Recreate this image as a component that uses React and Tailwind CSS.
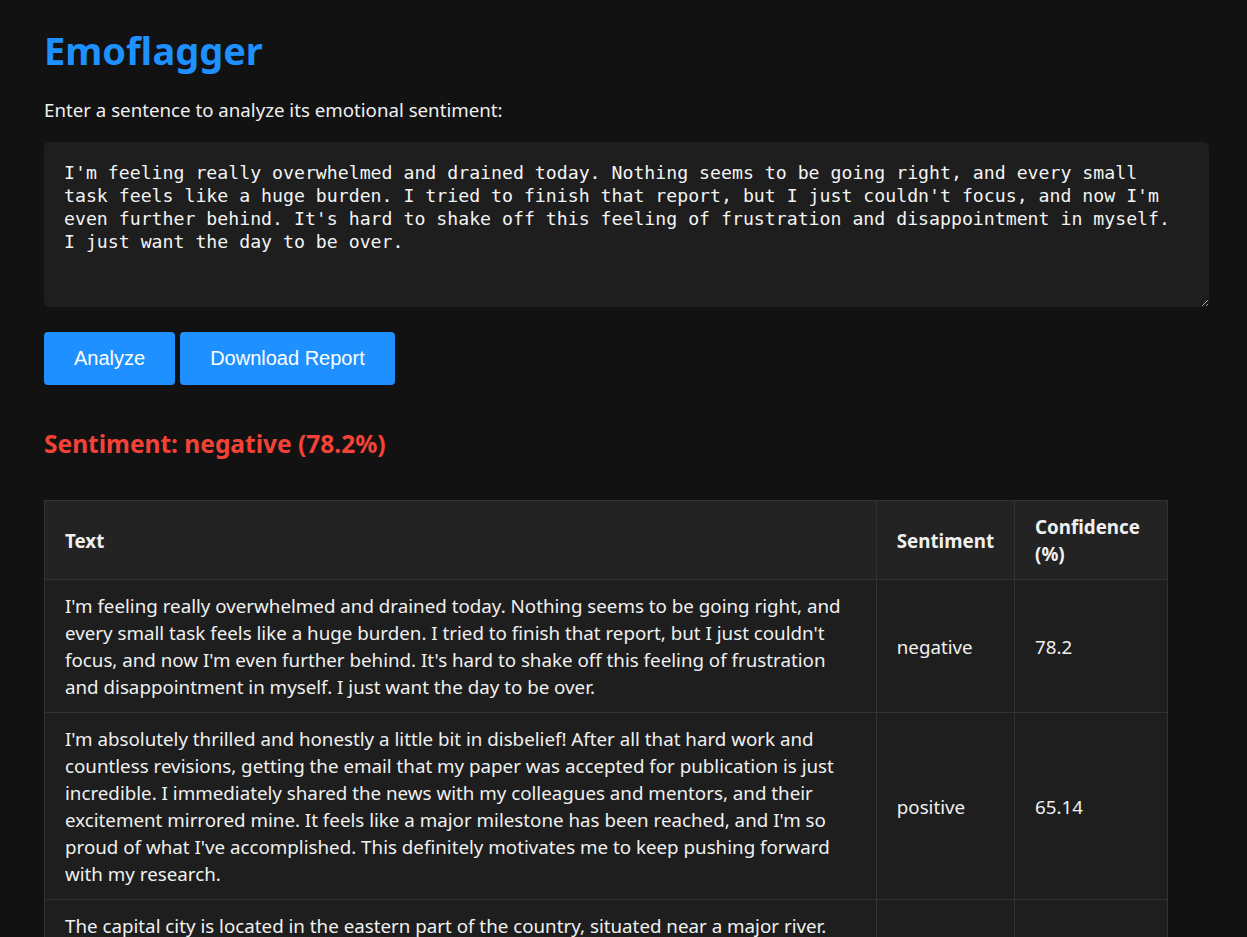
import React from "react";

const rows = [
  {
    text: "I'm feeling really overwhelmed and drained today. Nothing seems to be going right, and every small task feels like a huge burden. I tried to finish that report, but I just couldn't focus, and now I'm even further behind. It's hard to shake off this feeling of frustration and disappointment in myself. I just want the day to be over.",
    sentiment: "negative",
    conf: "78.2",
  },
  {
    text: "I'm absolutely thrilled and honestly a little bit in disbelief! After all that hard work and countless revisions, getting the email that my paper was accepted for publication is just incredible. I immediately shared the news with my colleagues and mentors, and their excitement mirrored mine. It feels like a major milestone has been reached, and I'm so proud of what I've accomplished. This definitely motivates me to keep pushing forward with my research.",
    sentiment: "positive",
    conf: "65.14",
  },
  {
    text: "The capital city is located in the eastern part of the country, situated near a major river. Approximately several million people live in the metropolitan area, which serves as the administrative and economic center of the region.",
    sentiment: "neutral",
    conf: "88.51",
  },
];

export default function App() {
  return (
    <div
      className="min-h-screen bg-[#121212] text-[#f0f0f0] pl-[44px] pr-[38px] pt-[26px] pb-10"
      style={{ fontFamily: '"Noto Sans", "Open Sans", sans-serif' }}
    >
      <h1 className="text-[38px] leading-[48px] font-bold text-[#1e90ff]">Emoflagger</h1>
      <p className="mt-[22px] text-[18.7px] leading-[27px]">Enter a sentence to analyze its emotional sentiment:</p>
      <textarea
        className="mt-[19px] block w-full h-[165px] bg-[#1e1e1e] rounded-[5px] pt-[19px] px-[20px] text-[18.2px] leading-[23px] text-[#f4f4f4] outline-none"
        style={{ fontFamily: '"DejaVu Sans Mono", "Liberation Mono", monospace' }}
        defaultValue={rows[0].text}
      />
      <div className="mt-[25px] flex gap-[5px]" style={{ fontFamily: '"Liberation Sans", Arial, sans-serif' }}>
        <button className="bg-[#1e90ff] text-white text-[20px] leading-[23px] py-[15px] px-[30px] rounded-[4px]">Analyze</button>
        <button className="bg-[#1e90ff] text-white text-[20px] leading-[23px] py-[15px] px-[30px] rounded-[4px]">Download Report</button>
      </div>
      <h2 className="mt-[43px] text-[24.5px] leading-[32px] font-bold text-[#f44336]">Sentiment: negative (78.2%)</h2>
      <table className="mt-[40px] w-[1124px] border-collapse text-[18.75px] leading-[27px]">
        <thead>
          <tr className="bg-[#232323]">
            <th className="border border-[#333333] text-left font-bold px-[20px] py-[12px] w-[835px]">Text</th>
            <th className="border border-[#333333] text-left font-bold px-[20px] py-[12px] w-[136px]">Sentiment</th>
            <th className="border border-[#333333] text-left font-bold px-[20px] py-[12px] w-[153px]">Confidence (%)</th>
          </tr>
        </thead>
        <tbody>
          {rows.map((r, i) => (
            <tr key={i} className="bg-[#1e1e1e]">
              <td className="border border-[#333333] px-[20px] py-[12px] align-middle">{r.text}</td>
              <td className="border border-[#333333] px-[20px] py-[12px] align-middle">{r.sentiment}</td>
              <td className="border border-[#333333] px-[20px] py-[12px] align-middle">{r.conf}</td>
            </tr>
          ))}
        </tbody>
      </table>
    </div>
  );
}
